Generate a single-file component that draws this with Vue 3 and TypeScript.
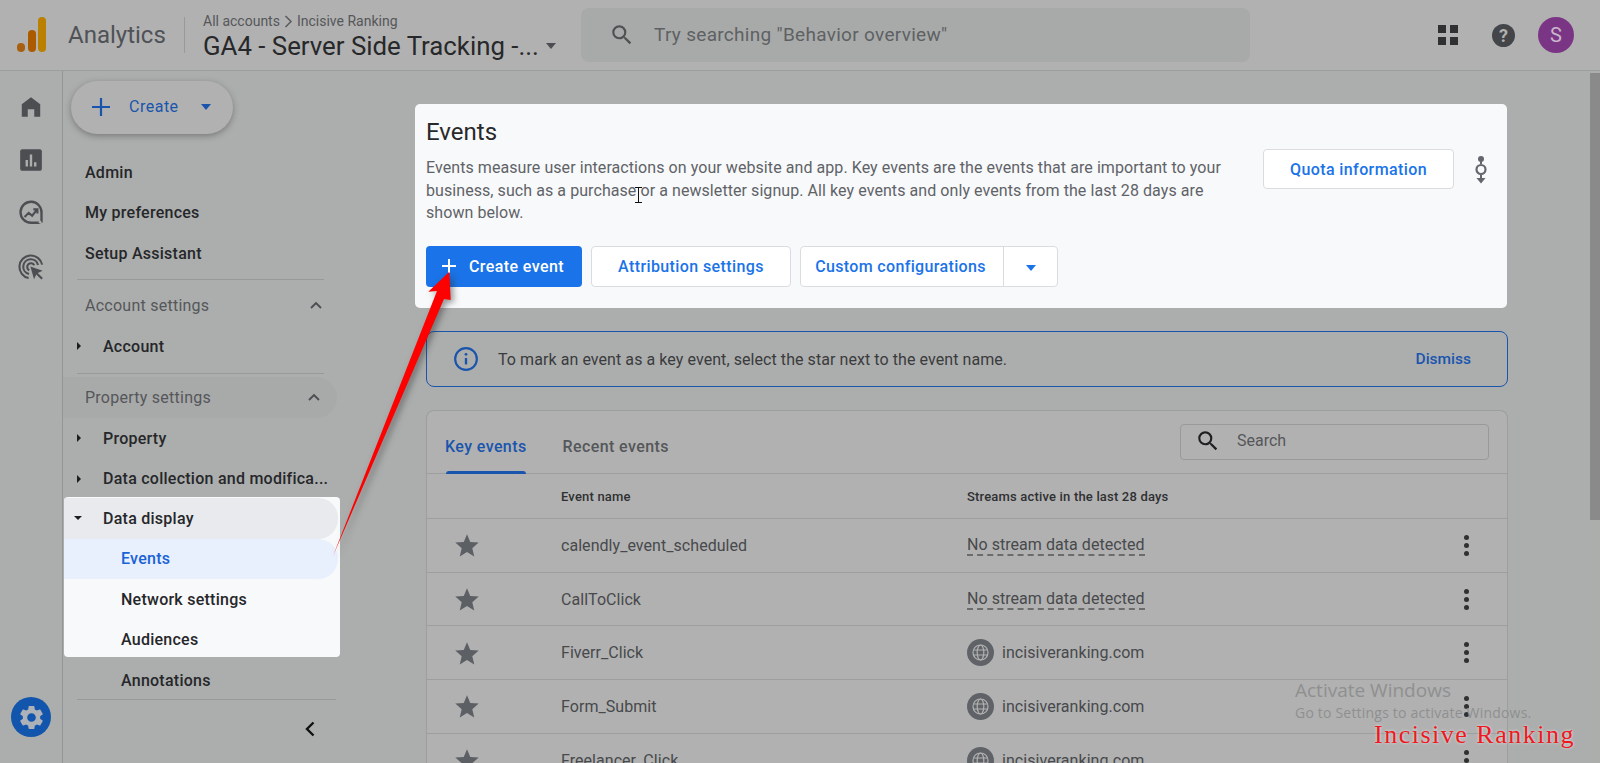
<script setup lang="ts">
interface NavRow {
  label: string
  caret?: 'right' | 'down'
  sub?: boolean
}

interface EventRow {
  name: string
  stream: string | null
}

const topLinks: string[] = ['Admin', 'My preferences', 'Setup Assistant']

const propertyRows: NavRow[] = [
  { label: 'Property', caret: 'right' },
  { label: 'Data collection and modifica...', caret: 'right' },
]

const focusSubRows: string[] = ['Network settings', 'Audiences']

const events: EventRow[] = [
  { name: 'calendly_event_scheduled', stream: null },
  { name: 'CallToClick', stream: null },
  { name: 'Fiverr_Click', stream: 'incisiveranking.com' },
  { name: 'Form_Submit', stream: 'incisiveranking.com' },
  { name: 'Freelancer_Click', stream: 'incisiveranking.com' },
]
</script>

<template>
  <div class="page">
    <header class="topbar">
      <svg class="logo" width="30" height="36" viewBox="0 0 30 36">
        <rect x="0" y="26" width="8" height="9" rx="4" fill="#a85f0f" />
        <rect x="11" y="13" width="8" height="22" rx="4" fill="#ab5a00" />
        <rect x="21" y="0" width="8" height="35" rx="4" fill="#bb8000" />
      </svg>
      <span class="product">Analytics</span>
      <span class="top-divider"></span>
      <div class="crumbs">
        <div class="crumb-line">
          All accounts
          <svg width="9" height="13" viewBox="0 0 9 13"><path d="M1.500 1l5.500 5.500-5.500 5.500" fill="none" stroke="#5a5b5c" stroke-width="1.500" /></svg>
          Incisive Ranking
        </div>
        <div class="property">GA4 - Server Side Tracking -...<span class="caret-down dark"></span></div>
      </div>
      <div class="search">
        <svg width="26" height="26" viewBox="0 0 24 24"><path fill="#4f5153" d="M15.500 14h-.79l-.28-.27A6.470 6.470 0 0 0 16 9.500 6.500 6.500 0 1 0 9.500 16c1.610 0 3.090-.59 4.230-1.570l.27.28v.79l5 4.990L20.490 19l-4.990-5zm-6 0C7.010 14 5 11.990 5 9.500S7.010 5 9.500 5 14 7.010 14 9.500 11.990 14 9.500 14z" /></svg>
        <span>Try searching "Behavior overview"</span>
      </div>
      <div class="top-actions">
        <div class="apps"><i></i><i></i><i></i><i></i></div>
        <div class="help">?</div>
        <div class="avatar">S</div>
      </div>
    </header>

    <div class="body">
      <nav class="rail">
        <div class="rail-icons">
          <svg width="26" height="26" viewBox="0 0 24 24"><path fill="#4c4e51" d="M3.500 21V9.500L12 3l8.500 6.500V21H15v-7H9v7z" /></svg>
          <svg width="26" height="26" viewBox="0 0 24 24">
            <rect x="2" y="2" width="20" height="20" rx="2" fill="#4c4e51" />
            <path d="M7 12h2.200v6H7zM10.900 7h2.200v11h-2.200zM14.800 14h2.200v4h-2.200z" fill="#acaead" />
          </svg>
          <svg width="28" height="28" viewBox="0 0 24 24" fill="none" stroke="#4c4e51" stroke-width="2">
            <path d="M20 19.500H12A9 9 0 1 1 21 11v8.500" stroke-linejoin="round" />
            <path d="M6.500 14.500l3.500-3.500 3 2.500 4-5M14 8h3.500v3.500" stroke-width="1.800" />
            <circle cx="19.800" cy="19" r="1.200" fill="#acaead" stroke="none" />
          </svg>
          <svg width="28" height="28" viewBox="0 0 24 24" fill="none" stroke="#4c4e51" stroke-width="1.800">
            <path d="M10 21.500A9.800 9.800 0 1 1 21.500 10" />
            <path d="M10.300 18A6.400 6.400 0 1 1 18 10.300" />
            <path d="M10.500 14.800A3.200 3.200 0 1 1 14.800 10.500" />
            <path d="M11.500 11.500l10.500 3.700-4.200 1.900 4.400 4.400-1.300 1.300-4.400-4.400-1.900 4.200z" fill="#4c4e51" stroke="none" />
          </svg>
        </div>
        <div class="gear">
          <svg width="29" height="29" viewBox="0 0 24 24"><path fill="#adb1b8" d="M19.140 12.940c.04-.3.06-.61.06-.94 0-.32-.02-.64-.07-.94l2.030-1.580c.18-.14.23-.41.12-.61l-1.920-3.320c-.12-.22-.37-.29-.59-.22l-2.390.96c-.5-.38-1.030-.7-1.620-.94l-.36-2.540c-.04-.24-.24-.41-.48-.41h-3.840c-.24 0-.43.17-.47.41l-.36 2.540c-.59.24-1.130.57-1.620.94l-2.390-.96c-.22-.08-.47 0-.59.22L2.740 8.870c-.12.21-.08.47.12.61l2.030 1.580c-.05.3-.09.63-.09.94s.02.64.07.94l-2.030 1.580c-.18.14-.23.41-.12.61l1.920 3.320c.12.22.37.29.59.22l2.390-.96c.5.38 1.030.7 1.620.94l.36 2.540c.05.24.24.41.48.41h3.840c.24 0 .44-.17.47-.41l.36-2.540c.59-.24 1.130-.56 1.620-.94l2.390.96c.22.08.47 0 .59-.22l1.920-3.320c.12-.22.07-.47-.12-.61l-2.010-1.580zM12 15.600c-1.980 0-3.600-1.620-3.600-3.600s1.620-3.600 3.600-3.600 3.600 1.620 3.600 3.600-1.620 3.600-3.600 3.600z" /></svg>
        </div>
      </nav>

      <aside class="sidebar">
        <button class="create-pill">
          <svg width="24" height="24" viewBox="0 0 24 24"><path d="M12 3v18M3 12h18" stroke="#1a55ad" stroke-width="2.200" /></svg>
          <span>Create</span>
          <span class="caret-down blue"></span>
        </button>

        <div v-for="link in topLinks" :key="link" class="nav-row top-link">{{ link }}</div>
        <div class="nav-divider first"></div>

        <div class="nav-row section">
          <span>Account settings</span>
          <svg width="14" height="9" viewBox="0 0 14 9"><path d="M2 7l5-5 5 5" fill="none" stroke="#4c4e51" stroke-width="1.800" /></svg>
        </div>
        <div class="nav-row child"><span class="caret-right"></span>Account</div>
        <div class="nav-divider"></div>

        <div class="nav-row section pill">
          <span>Property settings</span>
          <svg width="14" height="9" viewBox="0 0 14 9"><path d="M2 7l5-5 5 5" fill="none" stroke="#4c4e51" stroke-width="1.800" /></svg>
        </div>
        <div v-for="row in propertyRows" :key="row.label" class="nav-row child">
          <span class="caret-right"></span>{{ row.label }}
        </div>

        <div class="focus-box">
          <div class="nav-row child open"><span class="caret-small-down"></span>Data display</div>
          <div class="nav-row sub current">Events</div>
          <div v-for="row in focusSubRows" :key="row" class="nav-row sub">{{ row }}</div>
        </div>
        <div class="nav-row sub annotations">Annotations</div>
        <div class="nav-divider last"></div>
        <div class="collapse">
          <svg width="14" height="18" viewBox="0 0 14 18"><path d="M10.500 2.500L4 9l6.500 6.500" fill="none" stroke="#111" stroke-width="2.400" /></svg>
        </div>
      </aside>

      <main class="main">
        <section class="events-card">
          <div class="events-head">
            <div class="events-copy">
              <h1>Events</h1>
              <p>Events measure user interactions on your website and app. Key events are the events that are important to your business, such as a purchase or a newsletter signup. All key events and only events from the last 28 days are shown below.</p>
            </div>
            <button class="btn quota">Quota information</button>
            <svg class="flow-icon" width="14" height="28" viewBox="0 0 14 28">
              <circle cx="7" cy="3" r="3" fill="#63666c" />
              <path d="M7 5v3M7 19v5" stroke="#63666c" stroke-width="2" />
              <circle cx="7" cy="13.500" r="4.500" fill="none" stroke="#63666c" stroke-width="2.200" />
              <path d="M2.500 22h9L7 27.500z" fill="#63666c" />
            </svg>
          </div>
          <div class="events-actions">
            <button class="btn primary">
              <svg width="18" height="18" viewBox="0 0 18 18"><path d="M9 2v14M2 9h14" stroke="#fff" stroke-width="2" /></svg>
              Create event
            </button>
            <button class="btn attribution">Attribution settings</button>
            <div class="split">
              <button class="split-main">Custom configurations</button>
              <button class="split-arrow"><span class="caret-down bright"></span></button>
            </div>
          </div>
        </section>

        <section class="banner">
          <svg width="26" height="26" viewBox="0 0 24 24" fill="none">
            <circle cx="12" cy="12" r="10" stroke="#1a55ad" stroke-width="2" />
            <path d="M12 11v6" stroke="#1a55ad" stroke-width="2.200" />
            <circle cx="12" cy="7.700" r="1.300" fill="#1a55ad" />
          </svg>
          <span class="banner-text">To mark an event as a key event, select the star next to the event name.</span>
          <span class="dismiss">Dismiss</span>
        </section>

        <section class="table-card">
          <div class="tabs">
            <div class="tab selected">Key events</div>
            <div class="tab">Recent events</div>
            <div class="table-search">
              <svg width="26" height="26" viewBox="0 0 24 24"><path fill="#1f2021" d="M15.500 14h-.79l-.28-.27A6.470 6.470 0 0 0 16 9.500 6.500 6.500 0 1 0 9.500 16c1.610 0 3.090-.59 4.230-1.570l.27.28v.79l5 4.990L20.490 19l-4.990-5zm-6 0C7.010 14 5 11.990 5 9.500S7.010 5 9.500 5 14 7.010 14 9.500 11.990 14 9.500 14z" /></svg>
              <span>Search</span>
            </div>
          </div>
          <div class="table-row table-head">
            <span></span>
            <span>Event name</span>
            <span>Streams active in the last 28 days</span>
            <span></span>
          </div>
          <div v-for="row in events" :key="row.name" class="table-row">
            <svg class="star" width="26" height="26" viewBox="0 0 24 24"><path fill="#5c5f64" d="M12 2l3 7.200 7.800.6-5.900 5.100 1.800 7.600L12 18.400l-6.700 4.100 1.800-7.600-5.900-5.100 7.800-.6z" /></svg>
            <span class="event-name">{{ row.name }}</span>
            <span v-if="row.stream" class="stream">
              <svg width="27" height="27" viewBox="0 0 27 27" fill="none">
                <circle cx="13.500" cy="13.500" r="13.500" fill="#5f6267" />
                <g stroke="#b1b1b1" stroke-width="1.200">
                  <circle cx="13.500" cy="13.500" r="7.500" />
                  <ellipse cx="13.500" cy="13.500" rx="3.300" ry="7.500" />
                  <path d="M6.500 11h14M6.500 16h14" />
                </g>
              </svg>
              {{ row.stream }}
            </span>
            <span v-else class="no-stream"><span>No stream data detected</span></span>
            <span class="kebab"><i></i><i></i><i></i></span>
          </div>
        </section>
      </main>

      <div class="scroll-track"><div class="scroll-thumb"></div></div>
    </div>

    <!-- annotation layer pasted over the screenshot -->
    <svg class="arrow" width="1600" height="763" viewBox="0 0 1600 763">
      <path d="M449.300 271.700L428.300 291.700L437 291L333 556L444 299L450.700 300z" fill="#fe0000" />
    </svg>
    <svg class="ibeam" width="9" height="16" viewBox="0 0 9 16"><path d="M1 .5h7M1 15.500h7M4.500 .5v15" stroke="#111" fill="none" /></svg>
    <div class="watermark">
      <div class="wm-title">Activate Windows</div>
      <div class="wm-sub">Go to Settings to activate Windows.</div>
    </div>
    <div class="brand">Incisive Ranking</div>
  </div>
</template>

<style>
html,
body {
  margin: 0;
  overflow: hidden;
}
</style>

<style scoped>
* {
  box-sizing: border-box;
}

.page {
  position: relative;
  width: 1600px;
  height: 763px;
  overflow: hidden;
  background: #acaead;
  font-family: Roboto, "Liberation Sans", sans-serif;
  color: #1f1f1f;
}

button {
  font-family: inherit;
  cursor: pointer;
}

/* top bar */
.topbar {
  display: flex;
  align-items: center;
  height: 71px;
  padding-left: 17px;
  background: #b1b1b1;
  border-bottom: 1px solid #9b9d9e;
}

.logo {
  flex: none;
}

.product {
  margin-left: 21px;
  font-size: 24px;
  color: #4f5257;
  width: 116px;
}

.top-divider {
  width: 1px;
  height: 36px;
  background: #98999a;
}

.crumbs {
  margin-left: 18px;
  width: 378px;
  padding-top: 4px;
}

.crumb-line {
  display: flex;
  align-items: center;
  gap: 4px;
  font-size: 14px;
  color: #55575a;
  line-height: 18px;
}

.property {
  display: flex;
  align-items: center;
  font-size: 25.8px;
  line-height: 32px;
  color: #27282a;
}

.search {
  display: flex;
  align-items: center;
  gap: 19px;
  width: 669px;
  height: 54px;
  margin-top: -1px;
  padding-left: 28px;
  background: #a8aaa9;
  border-radius: 8px;
  font-size: 19px;
  letter-spacing: 0.3px;
  color: #5e6164;
}

.top-actions {
  display: flex;
  align-items: center;
  margin-left: auto;
}

.apps {
  display: grid;
  grid-template-columns: 8px 8px;
  gap: 4px;
  margin-right: 34px;
}

.apps i {
  display: block;
  width: 8px;
  height: 8px;
  background: #2f3032;
}

.help {
  width: 23px;
  height: 23px;
  border-radius: 50%;
  background: #434548;
  color: #b1b1b1;
  font-size: 18px;
  font-weight: 700;
  line-height: 23px;
  text-align: center;
}

.avatar {
  width: 36px;
  height: 36px;
  margin: 0 26px 0 23px;
  border-radius: 50%;
  background: #7b3585;
  color: #c9b6cc;
  font-size: 20px;
  line-height: 36px;
  text-align: center;
}

.body {
  display: flex;
  height: 692px;
}

/* icon rail */
.rail {
  flex: none;
  display: flex;
  flex-direction: column;
  align-items: center;
  width: 63px;
  padding-top: 9px;
  border-right: 1px solid #939596;
}

.rail-icons {
  display: grid;
  grid-auto-rows: 53.5px;
  align-items: center;
  justify-items: center;
}

.gear {
  display: flex;
  align-items: center;
  justify-content: center;
  width: 40px;
  height: 40px;
  margin-top: auto;
  margin-bottom: 26px;
  border-radius: 50%;
  background: #1255ac;
}

/* sidebar */
.sidebar {
  flex: none;
  width: 277px;
  padding-top: 10px;
}

.create-pill {
  display: flex;
  align-items: center;
  width: 162px;
  height: 53px;
  margin: 0 0 18px 8px;
  padding: 0 0 2px 18px;
  border: none;
  border-radius: 27px;
  background: #b1b1b1;
  box-shadow: 0 2px 6px rgba(60, 60, 60, 0.45);
  color: #1a55ad;
  font-size: 16px;
  letter-spacing: 0.5px;
}

.create-pill span:first-of-type {
  margin-left: 16px;
}

.nav-row {
  display: flex;
  align-items: center;
  height: 40.5px;
  font-size: 16px;
  font-weight: 500;
  letter-spacing: 0.25px;
  color: #26272a;
}

.top-link {
  padding-left: 22px;
}

.nav-divider {
  height: 1px;
  margin: 6px 16px 6px 14px;
  background: #98999a;
}

.nav-divider.first {
  margin-top: 5px;
}

.nav-divider.last {
  margin: -1px 4px 0 14px;
}

.section {
  justify-content: space-between;
  padding: 0 17px 0 22px;
  color: #55575a;
  font-weight: 400;
}

.pill {
  height: 41px;
  margin-top: -2.5px;
  border-radius: 0 21px 21px 0;
  background: #a8a9a9;
  padding-right: 16px;
  width: 274px;
}

.child {
  padding-left: 14px;
}

.caret-right {
  width: 0;
  height: 0;
  margin-right: 22px;
  border-left: 4px solid #1c1d1f;
  border-top: 4px solid transparent;
  border-bottom: 4px solid transparent;
}

.caret-small-down {
  width: 0;
  height: 0;
  margin-right: 21px;
  border-top: 4px solid #1c1d1f;
  border-left: 4px solid transparent;
  border-right: 4px solid transparent;
}

.caret-down {
  display: inline-block;
  width: 0;
  height: 0;
  border-top: 6px solid #555;
  border-left: 5.5px solid transparent;
  border-right: 5.5px solid transparent;
}

.caret-down.dark {
  margin-left: 7px;
  border-top-color: #4c4e51;
}

.caret-down.blue {
  margin-left: 22px;
  border-top-color: #1a55ad;
}

.caret-down.bright {
  border-top-color: #1a73e8;
}

.focus-box {
  width: 276px;
  height: 160px;
  margin: -2px 0 0 1px;
  padding-top: 1px;
  background: #f8f9fa;
  border-radius: 4px;
  overflow: hidden;
}

.focus-box .child {
  padding-left: 10px;
}

.open {
  width: 274px;
  background: #e8eaed;
  border-radius: 0 20px 20px 0;
}

.sub {
  padding-left: 58px;
}

.focus-box .sub {
  padding-left: 57px;
}

.current {
  width: 274px;
  background: #e8f0fe;
  border-radius: 0 20px 20px 0;
  color: #1a62d6;
}

.annotations {
  height: 40px;
  margin-top: 3px;
}

.collapse {
  display: flex;
  justify-content: flex-end;
  padding: 20px 23px 0 0;
}

/* main column */
.main {
  flex: none;
  width: 1250px;
  padding: 33px 82px 0 86px;
}

.events-card {
  height: 204px;
  margin: 0 1px 0 -11px;
  padding: 13px 11px 0;
  background: #f8f9fa;
  border-radius: 5px;
}

.events-head {
  display: flex;
  align-items: flex-start;
}

.events-copy {
  width: 837px;
  padding-right: 38px;
}

h1 {
  margin: 0;
  font-size: 24px;
  font-weight: 400;
  line-height: 30px;
  color: #28292b;
}

p {
  margin: 10px 0 0;
  font-size: 16px;
  letter-spacing: 0.07px;
  line-height: 22.6px;
  color: #5f6368;
}

.btn {
  height: 41px;
  border-radius: 4px;
  border: 1px solid #dadce0;
  background: #fff;
  color: #1a73e8;
  font-size: 16px;
  font-weight: 500;
  letter-spacing: 0.4px;
}

.quota {
  width: 191px;
  height: 40px;
  margin-top: 32px;
}

.flow-icon {
  margin: 39px 0 0 20px;
}

.events-actions {
  display: flex;
  gap: 9px;
  margin-top: 21px;
}

.primary {
  display: flex;
  align-items: center;
  gap: 11px;
  width: 156px;
  padding: 0 0 0 14px;
  border: none;
  background: #1a73e8;
  color: #fff;
}

.attribution {
  width: 200px;
}

.split {
  display: flex;
  width: 258px;
  height: 41px;
  background: #fff;
  border: 1px solid #dadce0;
  border-radius: 4px;
}

.split-main {
  width: 203px;
  padding: 0 3px 0 0;
  border: none;
  border-right: 1px solid #dadce0;
  background: none;
  color: #1a73e8;
  font-size: 16px;
  font-weight: 500;
  letter-spacing: 0.35px;
}

.split-arrow {
  flex: 1;
  border: none;
  background: none;
}

.banner {
  display: flex;
  align-items: center;
  height: 56px;
  margin-top: 23px;
  padding: 0 36px 0 26px;
  border: 1px solid #1a55ad;
  border-radius: 8px;
  background: #acaead;
}

.banner-text {
  margin-left: 19px;
  font-size: 16px;
  letter-spacing: 0.07px;
  color: #3a3b3d;
}

.dismiss {
  margin-left: auto;
  font-size: 15.5px;
  font-weight: 500;
  color: #1a55ad;
}

.table-card {
  height: 400px;
  margin-top: 23px;
  background: #b1b1b1;
  border: 1px solid #9c9e9f;
  border-bottom: none;
  border-radius: 8px 8px 0 0;
}

.tabs {
  display: flex;
  height: 63px;
  border-bottom: 1px solid #9c9e9f;
  padding-left: 18px;
}

.tab {
  position: relative;
  height: 63px;
  padding-top: 26px;
  margin-right: 36px;
  font-size: 16px;
  font-weight: 500;
  letter-spacing: 0.4px;
  color: #55575a;
}

.tab.selected {
  color: #1a55ad;
}

.tab.selected::after {
  content: '';
  position: absolute;
  left: 1px;
  right: 1px;
  bottom: 0;
  height: 3px;
  background: #1a55ad;
  border-radius: 3px 3px 0 0;
}

.table-search {
  display: flex;
  align-items: center;
  gap: 16px;
  width: 309px;
  height: 36px;
  margin: 13px 18px 0 auto;
  padding-left: 14px;
  border: 1px solid #98999a;
  border-radius: 4px;
  font-size: 16px;
  color: #55575a;
}

.table-search span {
  margin-top: -4px;
}

.table-search svg {
  margin-top: -2px;
}

.table-row {
  display: grid;
  grid-template-columns: 134px 406px 1fr 82px;
  align-items: center;
  height: 53.7px;
  border-bottom: 1px solid #9c9e9f;
  font-size: 16px;
  letter-spacing: 0.05px;
  color: #47494c;
}

.table-head {
  height: 45px;
  font-size: 13px;
  font-weight: 500;
  letter-spacing: 0.18px;
  color: #2f3032;
}

.star {
  margin-left: 27px;
}

.stream {
  display: flex;
  align-items: center;
  gap: 8px;
}

.no-stream span {
  display: inline-block;
  border-bottom: 2px dashed #6a6c6e;
}

.kebab {
  display: flex;
  flex-direction: column;
  align-items: center;
  gap: 3px;
}

.kebab i {
  display: block;
  width: 5px;
  height: 5px;
  border-radius: 50%;
  background: #2f3032;
}

.scroll-track {
  flex: 1;
  padding-top: 2px;
  background: #acaeac;
}

.scroll-thumb {
  height: 447px;
  background: #8a8a8a;
}

/* annotation layer */
.arrow {
  position: absolute;
  left: 0;
  top: 0;
  pointer-events: none;
  filter: drop-shadow(3px 3px 3px rgba(50, 50, 50, 0.5));
}

.ibeam {
  position: absolute;
  left: 634px;
  top: 187px;
}

.watermark {
  position: absolute;
  left: 1295px;
  top: 678px;
  font-family: "Open Sans", sans-serif;
  color: #8e9090;
  white-space: nowrap;
}

.wm-title {
  font-size: 19px;
  line-height: 24px;
}

.wm-sub {
  margin-top: 1px;
  font-size: 14px;
  letter-spacing: 0.2px;
  line-height: 20px;
}

.brand {
  position: absolute;
  left: 1374px;
  top: 720px;
  font-family: "Liberation Serif", serif;
  font-size: 26px;
  line-height: 30px;
  letter-spacing: 1.5px;
  color: #f01820;
  text-shadow: 0 0 3px rgba(255, 255, 255, 0.7);
  white-space: nowrap;
}
</style>
